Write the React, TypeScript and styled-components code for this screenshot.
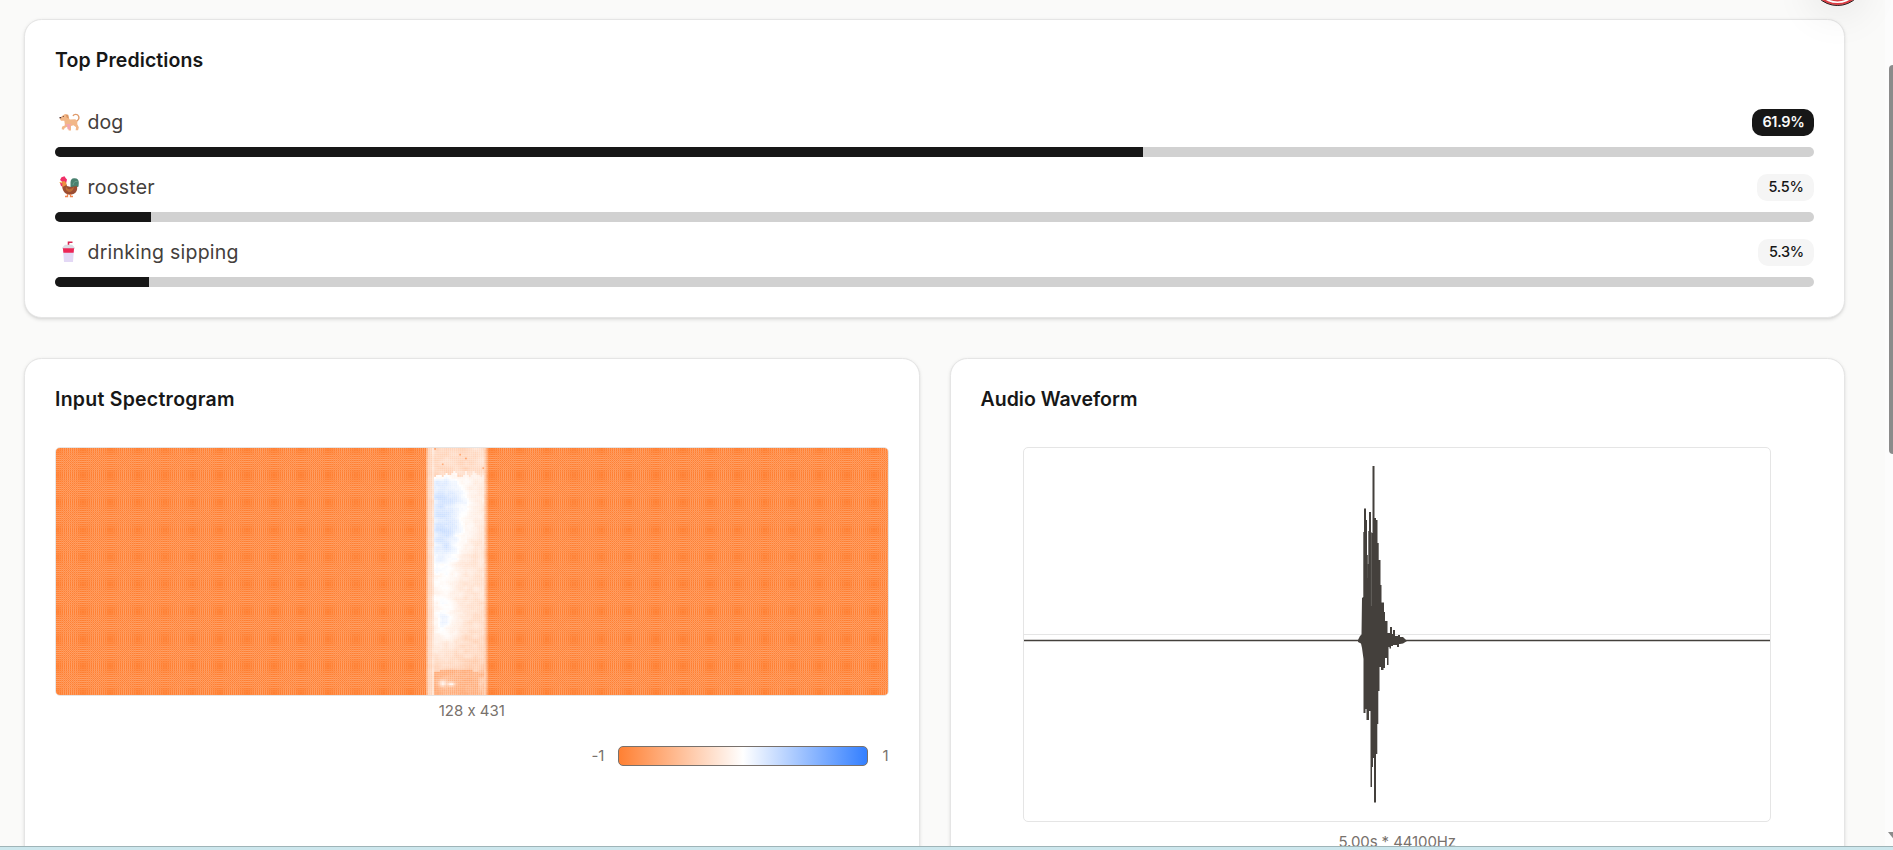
import React from "react";
import styled, { createGlobalStyle } from "styled-components";

const GlobalStyle = createGlobalStyle`
  * { box-sizing: border-box; }
  html, body { margin: 0; height: 100%; overflow: hidden; background: #fafaf9; }
  body {
    font-family: Inter, "Liberation Sans", sans-serif;
    font-feature-settings: "calt" 0;
    color: #0f0f0f;
  }
`;

const Window = styled.div`
  display: flex;
  flex-direction: column;
  height: 850px;
  overflow: hidden;
`;
const Viewport = styled.div`
  display: flex;
  height: 846px;
  flex: none;
  overflow: hidden;
`;
const Content = styled.main`
  position: relative;
  flex: 1;
  padding: 19px 40px 0 24px;
  display: flex;
  flex-direction: column;
  gap: 40px;
`;
const Card = styled.section<{ $height: number }>`
  height: ${(p) => p.$height}px;
  flex: none;
  min-width: 0;
  background: #fff;
  border: 1px solid #e5e5e5;
  border-radius: 17.5px;
  box-shadow: 0 1.25px 3.75px rgba(0, 0, 0, 0.1), 0 1.25px 2.5px -1.25px rgba(0, 0, 0, 0.1);
  padding: 30px;
  display: flex;
  flex-direction: column;
`;
const Title = styled.h2<{ $spacing: number }>`
  margin: 0;
  height: 58px;
  flex: none;
  line-height: 20px;
  font-size: 19.5px;
  font-weight: 600;
  letter-spacing: ${(p) => p.$spacing}px;
  color: #171717;
`;
const Predictions = styled.div`
  display: flex;
  flex-direction: column;
  gap: 17px;
  padding-top: 1px;
`;
const Prediction = styled.div`
  display: flex;
  flex-direction: column;
  gap: 11px;
`;
const PredictionHead = styled.div`
  display: flex;
  align-items: center;
  justify-content: space-between;
  height: 27px;
`;
const Label = styled.div<{ $spacing: number }>`
  display: flex;
  align-items: center;
  gap: 7.5px;
  padding-left: 3px;
  font-size: 19.5px;
  line-height: 22px;
  padding-bottom: 1px;
  letter-spacing: ${(p) => p.$spacing}px;
  color: #44403c;
`;
const Emoji = styled.svg`
  width: 22px;
  height: 22px;
`;
const Badge = styled.span<{ $primary?: boolean; $width: number }>`
  width: ${(p) => p.$width}px;
  height: 27px;
  border-radius: 10px;
  display: flex;
  align-items: center;
  justify-content: center;
  padding: 0 0 1.5px 1px;
  font-size: 14.5px;
  letter-spacing: -0.3px;
  font-weight: ${(p) => (p.$primary ? 600 : 500)};
  color: ${(p) => (p.$primary ? "#fafafa" : "#171717")};
  background: ${(p) => (p.$primary ? "#171717" : "#f5f5f5")};
`;
const Track = styled.div`
  height: 10px;
  border-radius: 5px;
  overflow: hidden;
  background: #d1d1d1;
`;
const Fill = styled.div`
  height: 100%;
  background: #171717;
`;
const Columns = styled.div`
  display: grid;
  grid-template-columns: 1fr 1fr;
  gap: 30px;
`;
const Heatmap = styled.div`
  height: 249px;
  border: 1px solid #e7e5e4;
  border-radius: 5px;
  overflow: hidden;
  svg { display: block; }
`;
const WaveBox = styled.div`
  width: 748px;
  height: 375px;
  align-self: center;
  border: 1px solid #e5e5e5;
  border-radius: 5px;
  svg { display: block; }
`;
const Caption = styled.p<{ $spacing: number; $top: number }>`
  margin: ${(p) => p.$top}px 0 0;
  text-align: center;
  font-size: 15px;
  line-height: 20px;
  letter-spacing: ${(p) => p.$spacing}px;
  color: #78716c;
`;
const Legend = styled.div`
  margin-top: 25px;
  height: 20px;
  display: flex;
  align-items: center;
  justify-content: flex-end;
  gap: 14px;
  font-size: 15px;
  color: #78716c;
  span { padding-bottom: 1px; }
`;
const Ramp = styled.div`
  width: 250px;
  height: 20px;
  border: 1px solid #78716c;
  border-radius: 5px;
  background: linear-gradient(to right, #ff8033, #fff 50%, #337fff);
`;
const RecordButton = styled.div`
  position: absolute;
  left: 1810px;
  top: -49px;
  width: 55px;
  height: 55px;
  border-radius: 50%;
  border: 1.5px solid #25191a;
  background: #dc4449;
  box-shadow: inset 0 0 0 2px #dc3c42, inset 0 0 0 3.6px #fff, 0 10px 40px rgba(0, 0, 0, 0.08);
`;
const Scrollbar = styled.div`
  width: 8px;
  background: #fcfcfc;
  padding: 65px 0 6px 4px;
  display: flex;
  flex-direction: column;
  justify-content: space-between;
  overflow: hidden;
`;
const Thumb = styled.div`
  width: 8px;
  height: 389px;
  border-radius: 4px;
  background: #8b8b8b;
`;
const Arrow = styled.svg`
  display: block;
  width: 13px;
  height: 8px;
  margin-left: -1px;
  flex: none;
`;
const Taskbar = styled.footer`
  height: 4px;
  flex: none;
  background: #cde7ed;
  border-top: 1px solid #9fb4b8;
`;

const COLS = 431;
const ROWS = 128;
const WIDTH = 832;
const HEIGHT = 247;
const CELL = 831.5 / COLS;
const BAND_START = 192;
const BAND_END = 224;

const noise = (x: number, y: number) => {
  const v = Math.sin(x * 12.9898 + y * 78.233) * 43758.5453;
  return v - Math.floor(v);
};
const smooth = (x: number, y: number) => {
  const xi = Math.floor(x);
  const yi = Math.floor(y);
  const fx = x - xi;
  const fy = y - yi;
  const top = noise(xi, yi) * (1 - fx) + noise(xi + 1, yi) * fx;
  const bottom = noise(xi, yi + 1) * (1 - fx) + noise(xi + 1, yi + 1) * fx;
  return top * (1 - fy) + bottom * fy - 0.5;
};
const blob = (x: number, y: number, cx: number, cy: number, rx: number, ry: number) =>
  Math.exp(-(((x - cx) / rx) ** 2) - ((y - cy) / ry) ** 2);

/* Signed intensity, -1 (orange) to 1 (blue), for a cell of the active band. */
const intensity = (col: number, row: number) => {
  const x = col - BAND_START;
  const n = noise(x, row) - 0.5;
  const s = smooth(x / 2.5, row / 2.5) + 0.6 * smooth(x / 5 + 40, row / 1.5);
  if (x === 0) return -0.55 + n * 0.06;
  if (x < 3) return -0.34 + s * 0.06;
  if (x === 30) return -0.46 + n * 0.08;
  if (x === 31) return -0.75 + n * 0.06;
  const top = 115 + smooth(x / 2 + 9, 3) * 2;
  if (row > top && x > 3) {
    const spots = blob(x, row, 8, 121.5, 2, 1.8) + blob(x, row, 12.5, 122, 1.8, 1.1);
    const edge = x > 26 ? 0.12 + s * 0.25 : 0;
    return Math.min(0, -0.64 + spots * 0.56 + edge + s * 0.08 + n * 0.05);
  }
  if (x < 4) return -0.22 + s * 0.1;
  if (row < 13 + smooth(x / 2, 7) * 4) {
    return -0.31 + s * 0.16 - (noise(x + 9, row) > 0.988 ? 0.4 : 0);
  }
  let v = -0.08 - (x / 31) * 0.15 - Math.max(0, row - 60) * 0.0022;
  v += 0.27 * blob(x, row, 8, 22, 10, 9);
  v += 0.31 * blob(x, row, 9, 40, 9, 13);
  v += 0.15 * blob(x, row, 10, 53, 7, 7);
  v += 0.12 * blob(x, row, 20, 30, 9, 14);
  v += 0.1 * blob(x, row, 10, 63, 9, 2);
  v += 0.12 * blob(x, row, 9, 90, 5, 8);
  v += 0.12 * blob(x, row, 9, 82, 8, 24);
  v -= Math.max(0, row - 94) * 0.005;
  return v + s * 0.12 + n * 0.03;
};
const cellColor = (v: number) => {
  const t = Math.min(1, Math.abs(v));
  return v < 0
    ? `rgb(255,${Math.round(255 - 127 * t)},${Math.round(255 - 204 * t)})`
    : `rgb(${Math.round(255 - 204 * t)},${Math.round(255 - 127 * t)},255)`;
};

/* Fraction of each pixel lying before the cell boundary inside it; 0 without one. */
const boundaries = (length: number) => {
  const out: number[] = new Array(length).fill(0);
  for (let k = 0; k * CELL < length; k++) {
    const p = k * CELL;
    const i = Math.floor(p);
    out[i] = Math.round((p - i) * 16) / 16;
  }
  return out;
};
const xEdges = boundaries(WIDTH);
const yEdges = boundaries(HEIGHT);

/* Background left visible where antialiased cells meet. */
const seam = (f: number, g: number) =>
  (1 - Math.min(f, g)) *
  (1 - Math.min(f, 1 - g)) *
  (1 - Math.min(1 - f, g)) *
  (1 - Math.min(1 - f, 1 - g));

const bandLeft = Math.floor(BAND_START * CELL);
const bandRight = Math.floor(BAND_END * CELL);

const rowKinds = Array.from(new Set(yEdges)).map((g) => {
  const paths = new Map<number, string>();
  xEdges.forEach((f, x) => {
    if (x >= bandLeft && x < bandRight) return;
    const a = Math.round(seam(f, g) * 40) / 40;
    if (a > 0) paths.set(a, (paths.get(a) ?? "") + `M${x} 0h1v1h-1z`);
  });
  return { g, paths: Array.from(paths) };
});

const Spectrogram = () => (
  <svg width={WIDTH} height={HEIGHT} viewBox={`0 0 ${WIDTH} ${HEIGHT}`}>
    <defs>
      {rowKinds.map(({ g, paths }) => (
        <g key={g} id={`seam-${g * 16}`} fill="#fff">
          {paths.map(([a, d]) => (
            <path key={a} d={d} fillOpacity={a} />
          ))}
        </g>
      ))}
    </defs>
    <rect width={bandLeft + 0.5} height={HEIGHT} fill="#ff8033" />
    <rect x={bandRight} width={WIDTH - bandRight} height={HEIGHT} fill="#ff8033" />
    <g shapeRendering="crispEdges">
      {yEdges.map((g, y) => (
        <use key={y} href={`#seam-${g * 16}`} y={y} />
      ))}
    </g>
    <g transform={`scale(${CELL})`}>
      {Array.from({ length: ROWS * (BAND_END - BAND_START) }, (_, i) => {
        const c = BAND_START + (i % (BAND_END - BAND_START));
        const r = Math.floor(i / (BAND_END - BAND_START));
        return <rect key={i} x={c} y={r} width="1" height="1" fill={cellColor(intensity(c, r))} />;
      })}
    </g>
  </svg>
);

const Wave = () => (
  <svg width="746" height="373" viewBox="1024 448 746 373">
    <path d="M1024 634.5H1771" stroke="#e5e5e5" />
    <path d="M1024 640.5H1771" stroke="#44403c" strokeWidth="1.5" />
    <path
      fill="#44403c"
      d="M1358 640L1360 636L1361.5 634.5L1362 598L1363.3 597V532H1364V508.500H1366V520H1367V555H1367.700V564H1368.300V531H1369V512H1371V533H1372.500V466H1374.500V518H1376V520H1377.500V543H1378.700V560H1380.500V585H1381.500V602.500H1384V612H1385V621H1387.500V633H1390V627H1392V634H1393V630H1395V636H1398V635H1400V637H1403L1407 641L1403 643.500L1400 644H1399V647H1397V645H1393V646H1391V648.500H1389.500V647H1388.500V665H1387V658H1385V668H1383.500V670H1381V667H1379.500V691H1378.300V724H1377.300V754H1376V802.500H1374V758H1373V767H1372V787H1370.500V711H1369V720H1366.500V709H1365.500V713H1363.500V659L1362 648L1361 643.500L1358 642Z"
    />
    <path d="M1371.400 532V606" stroke="#716e6a" strokeWidth=".7" />
    <path d="M1367.500 555V578" stroke="#5c5955" strokeWidth=".6" />
  </svg>
);

const Dog = () => (
  <Emoji viewBox="0 0 22 22">
    <path d="M17.500 10.500c3-.5 4-3.500 3-5.500s-4.500-2.300-5.500 0" fill="none" stroke="#df9b6b" strokeWidth="1.400" />
    <path d="M4 5l3-2 3 1 .8 3 1 1.500 5.500-.2 2 2v3l1.500 3-.7 3h-2.500l.5-3-2.600-2-2.500.7v4.500h-2.300l-1-4-3 1.600-.8 1.600-2.200-.5.3-2.500 3-1.500-.7-4.500H3L1.500 7.600z" fill="#f2b787" />
    <path d="M6 14l3-1 5 .2-2 1.200v3.800h-2.400l-.7-4z" fill="#f3a6ad" />
    <path d="M7.500 3.500l2.700.3.700 3.600-2-.7z" fill="#dc9662" />
    <path d="M1.500 6.700h1.700M4.800 5.500h.9" stroke="#49333a" strokeWidth="1.200" />
  </Emoji>
);
const Rooster = () => (
  <Emoji viewBox="0 0 22 22">
    <path d="M12.500 11.500V6.500q0-4 3.500-4.200 5-.3 4.800 4.700l-.3 3.500-4 2z" fill="#49816f" />
    <path d="M15 9q1-4.500 4.500-3.500" stroke="#68a08a" fill="none" />
    <path d="M3.500 6l3.500-2 2 6 4 1 6-1q1 6-3.500 8-5 2-8.500-1Q3.500 13.500 4.500 8z" fill="#9b4d32" />
    <path d="M8 10.500q2 5 8 .500-1 5-5 5-4-1-3-5.500" fill="#bc6b36" />
    <path d="M4 7q0-3.500 3.500-3.500L8.500 9 4.500 11z" fill="#ef913f" />
    <path d="M2 4L3.500 1.200l3-1 1.300 2L9 3.500 8.200 7 6.500 5 4 5.500zM2 7h2.300v3.500L3 10z" fill="#f02f67" />
    <path d="M1 6.500l2.500-1v2z" fill="#edb04e" />
    <path d="M9.500 18v2.500H7M12.500 18v2.500H15" fill="none" stroke="#ef8550" strokeWidth="1.300" />
  </Emoji>
);
const Cup = () => (
  <Emoji viewBox="0 0 22 22">
    <path d="M10.500 5V1.200h4" fill="none" stroke="#d92551" strokeWidth="1.600" />
    <path d="M4.300 6.500L7 3.800h7l2.700 2.700v1.500H4.300z" fill="#dcdbe3" />
    <path d="M5 8h11L15 21H6z" fill="#e3d8f5" />
    <path d="M4.900 7.300h11.200l-.5 4.500H5.400z" fill="#ed2656" />
  </Emoji>
);

const rows = [
  { icon: <Dog />, name: "dog", spacing: 0.1, value: 61.9, fill: 61.87, badge: 62 },
  { icon: <Rooster />, name: "rooster", spacing: 0.25, value: 5.5, fill: 5.46, badge: 57 },
  { icon: <Cup />, name: "drinking sipping", spacing: 0.25, value: 5.3, fill: 5.32, badge: 56 },
];

export default function App() {
  return (
    <Window>
      <GlobalStyle />
      <Viewport>
        <Content>
          <Card $height={299}>
            <Title $spacing={0.1}>Top Predictions</Title>
            <Predictions>
              {rows.map((r, i) => (
                <Prediction key={r.name}>
                  <PredictionHead>
                    <Label $spacing={r.spacing}>
                      {r.icon}
                      {r.name}
                    </Label>
                    <Badge $primary={i === 0} $width={r.badge}>{r.value}%</Badge>
                  </PredictionHead>
                  <Track>
                    <Fill style={{ width: `${r.fill}%` }} />
                  </Track>
                </Prediction>
              ))}
            </Predictions>
          </Card>
          <Columns>
            <Card $height={560}>
              <Title $spacing={0.25}>Input Spectrogram</Title>
              <Heatmap>
                <Spectrogram />
              </Heatmap>
              <Caption $spacing={0} $top={5}>128 x 431</Caption>
              <Legend>
                <span>-1</span>
                <Ramp />
                <span>1</span>
              </Legend>
            </Card>
            <Card $height={560}>
              <Title $spacing={0}>Audio Waveform</Title>
              <WaveBox>
                <Wave />
              </WaveBox>
              <Caption $spacing={-0.1} $top={10}>5.00s * 44100Hz</Caption>
            </Card>
          </Columns>
          <RecordButton />
        </Content>
        <Scrollbar>
          <Thumb />
          <Arrow viewBox="0 0 13 8">
            <path d="M0 0H13L6.500 8Z" fill="#8b8b8b" />
          </Arrow>
        </Scrollbar>
      </Viewport>
      <Taskbar />
    </Window>
  );
}
